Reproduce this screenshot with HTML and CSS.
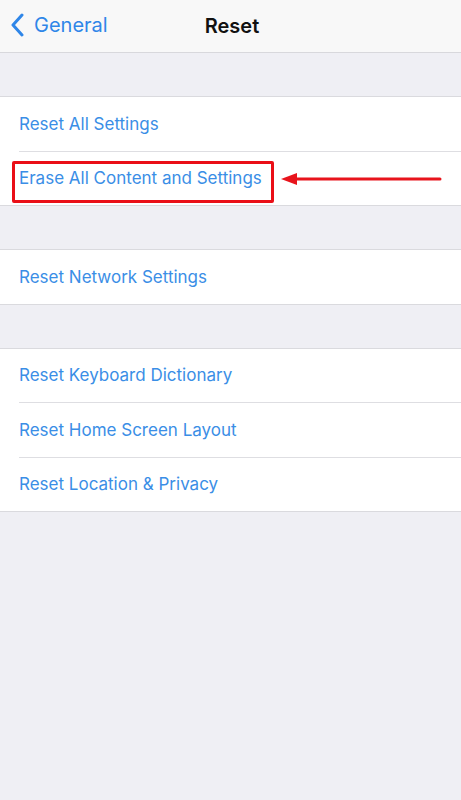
FILE: index.html
```html
<!DOCTYPE html>
<html>
<head>
  <title>Reset</title>
  <link rel="stylesheet" href="styles.css">
</head>
<body>
  <div class="nav-bar">
    <div class="back">
      <svg class="chevron" width="14" height="24" viewBox="0 0 14 24">
        <path d="M12 2 L3 12 L12 22" fill="none" stroke="#2f86e8" stroke-width="3" stroke-linecap="round" stroke-linejoin="round"/>
      </svg>
      <span class="back-label">General</span>
    </div>
    <div class="nav-title">Reset</div>
  </div>

  <div class="group">
    <div class="row">Reset All Settings</div>
    <div class="row highlighted">
      Erase All Content and Settings
      <div class="mark-box"></div>
      <svg class="mark-arrow" width="162" height="16" viewBox="0 0 162 16">
        <path d="M0 8 L16 2 L16 14 Z" fill="#e8141c"/>
        <path d="M14 8 L159 8" stroke="#e8141c" stroke-width="3" stroke-linecap="round"/>
      </svg>
    </div>
  </div>

  <div class="group">
    <div class="row">Reset Network Settings</div>
  </div>

  <div class="group">
    <div class="row">Reset Keyboard Dictionary</div>
    <div class="row">Reset Home Screen Layout</div>
    <div class="row">Reset Location &amp; Privacy</div>
  </div>
</body>
</html>
```

FILE: styles.css
```css
body
{
  margin:0;
  height:800px;
  background-color:#efeff4;
  font-family:Inter, "Liberation Sans", sans-serif;
}

.nav-bar
{
  height:52px;
  background-color:#f8f8f8;
  border-bottom:1px solid #d8d8dc;
  position:relative;

  display:flex;
  align-items:center;
  justify-content:center;
}

.back
{
  position:absolute;
  left:10px;
  top:13px;

  display:flex;
  align-items:center;
  gap:10px;
}

.back-label
{
  color:#2f86e8;
  font-size:20px;
}

.nav-title
{
  font-size:20px;
  font-weight:600;
  color:#111;
  margin-left:3px;
}

.group
{
  margin-top:43px;
  background-color:#fff;
  border-top:1px solid #dadade;
  border-bottom:1px solid #dadade;
}

.row
{
  height:53.5px;
  margin-left:19px;
  border-bottom:1px solid #dedee2;

  display:flex;
  align-items:center;

  color:#3a8ee6;
  font-size:17px;
  position:relative;
}

.row:last-child
{
  border-bottom:none;
}

.mark-box
{
  position:absolute;
  left:-7px;
  top:9px;
  width:256px;
  height:36px;
  border:3px solid #ea0f17;
  border-radius:2px;
}

.mark-arrow
{
  position:absolute;
  left:262px;
  top:19px;
}
```
